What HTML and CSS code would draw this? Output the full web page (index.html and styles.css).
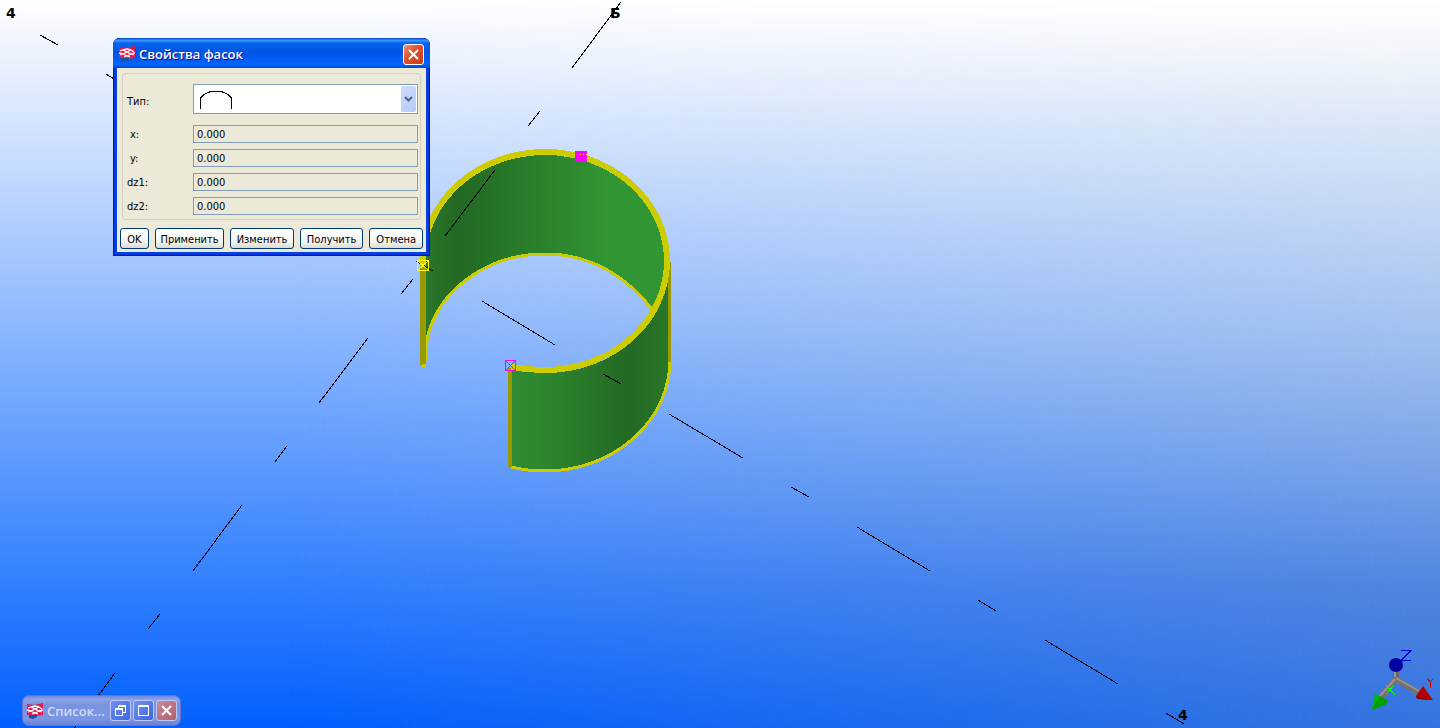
FILE: index.html
```html
<!DOCTYPE html>
<html lang="ru">
<head>
    <meta charset="UTF-8">
    <meta name="viewport" content="width=device-width, initial-scale=1.0">
    <title>Свойства фасок</title>
    <link rel="stylesheet" href="styles.css">
</head>
<body>

<main class="viewport">
    <svg class="scene" viewBox="0 0 1440 728" preserveAspectRatio="xMinYMin slice" shape-rendering="crispEdges">
        <defs>
            <linearGradient id="inside" gradientUnits="userSpaceOnUse" x1="426" y1="0" x2="665" y2="0">
                <stop offset="0" stop-color="#2a772a"/>
                <stop offset="0.13" stop-color="#236823"/>
                <stop offset="0.4" stop-color="#297b2a"/>
                <stop offset="0.75" stop-color="#319534"/>
                <stop offset="1" stop-color="#319534"/>
            </linearGradient>
            <linearGradient id="outside" gradientUnits="userSpaceOnUse" x1="510" y1="0" x2="670" y2="0">
                <stop offset="0" stop-color="#2f8d32"/>
                <stop offset="0.2" stop-color="#2d872f"/>
                <stop offset="0.75" stop-color="#236823"/>
                <stop offset="1" stop-color="#2a782a"/>
            </linearGradient>
        </defs>

        <!-- curved plate, inner wall -->
        <path d="M426 362V261A119 106 0 0 1 664 261A119 106 0 0 1 652 309Q606 254 545 254A119 108 0 0 0 426 350Z" fill="url(#inside)"/>
        <path d="M425 362Q426 340 430 328C445 286 490 254 545 254Q608 254 652 309" fill="none" stroke="#cccc00" stroke-width="3"/>
        <!-- outer wall -->
        <path d="M511 369Q528 373 546 373A124 112 0 0 0 670 261V360A125 111 0 0 1 545 471Q528 471 511 467Z" fill="url(#outside)"/>
        <path d="M670 360A125 111 0 0 1 545 471Q528 471 511 467" fill="none" stroke="#cccc00" stroke-width="3"/>
        <path d="M668 262h3v100h-3zM508 368h4v99h-4zM420 255h6v110h-6z" fill="#999900"/>
        <!-- top edge -->
        <path d="M423 266V261A122 109 0 0 1 545 152A122 109 0 0 1 667 261A122 109 0 0 1 545 370Q528 370 511 367" fill="none" stroke="#cccc00" stroke-width="6"/>
        <path d="M422 364h4v3h-4z" fill="#cccc00"/>

        <!-- grid axes -->
        <path class="axis" d="M40 35l18 10M106 74l18 11M416 261l17 10M482 301l73 44M603 374l18 10M669 414l74 44M791 487l18 10M857 527l73 44M978 600l18 11M1045 640l73 44M1166 713l18 11"/>
        <path class="axis" d="M621 2L572 68M540 111l-12 15M495 170l-50 66M413 279l-12 15M368 338l-49 65M287 446l-12 16M242 505l-49 66M160 614l-12 15M115 673l-49 66"/>

        <!-- contour points -->
        <path d="M575 151h12v11h-12z" fill="#ff00ff"/>
        <path d="M577 154h1m2 0h1m2 0h1m2 0h1" stroke="#ffff00"/>
        <path d="M417.500 260.500h11v10h-11zl11 10m0-10l-11 10" fill="none" stroke="#ffff00"/>
        <path d="M505.500 360.500h10v10h-10zl10 10m0-10l-10 10" fill="none" stroke="#ff00ff"/>

        <text class="axis-name" x="6" y="18">4</text>
        <text class="axis-name" x="610" y="18">Б</text>
        <text class="axis-name" x="1178" y="720">4</text>
    </svg>

    <svg class="compass" width="72" height="66" viewBox="0 0 72 66">
        <path d="M28 15v14" stroke="#68686c" stroke-width="6"/>
        <path d="M28 29L12 48" stroke="#77706f" stroke-width="6"/>
        <path d="M28 29l23 14" stroke="#77706f" stroke-width="6"/>
        <path d="M27 29L11 47M28 28l23 13M27 18v9" stroke="#9c9494" stroke-width="2"/>
        <circle cx="28" cy="15" r="7" fill="#0000a0"/>
        <path d="M7 44l13 6q-1 4-3 5L4 60z" fill="#00a000"/>
        <path d="M7 44l5 2-8 14z" fill="#00b510"/>
        <path d="M55 36L48 46q0 2 2 3l15 1z" fill="#b50000"/>
        <path d="M48 46q0 2 2 3l15 1z" fill="#820000"/>
        <g fill="none" shape-rendering="crispEdges">
            <path d="M33 .500h10L33 10.500h10" stroke="#0000d0"/>
            <path d="M18 35l9 10M26 35l-8 9" stroke="#00ff00"/>
            <path d="M59 28l3 4v6M66 28l-4 4" stroke="#e80000"/>
        </g>
    </svg>

    <section class="dialog">
        <header class="title-bar">
            <svg class="logo" width="16" height="16" viewBox="0 0 16 16">
                <path d="M0 1l7 1 9-2v12l-6 1-10-1z" fill="#e6194b"/>
                <path d="M2 12h8v2l-4 2-4-1z" fill="#1d4fa8"/>
                <path d="M1 5l3-1 4 2 4-2 3 2M0 7l4 1 4-2 4 2 4-1M1 9l3-1 4 2 4-2 3 1M4 4l4-1 4 1M5 11l3-1 3 1" fill="none" stroke="#fff" stroke-width="1.300"/>
            </svg>
            <h1>Свойства фасок</h1>
            <button class="close" aria-label="Закрыть">
                <svg width="11" height="11" viewBox="0 0 11 11"><path d="M1 1l9 9M10 1l-9 9" stroke="#fff" stroke-width="2"/></svg>
            </button>
        </header>
        <form class="dialog-body">
            <div class="group">
                <div class="row type-row">
                    <label for="type">Тип:</label>
                    <div class="combo">
                        <select id="type">
                            <option value="arc" label=" "></option>
                        </select>
                        <svg class="arc" width="34" height="20" viewBox="0 0 34 20" shape-rendering="crispEdges"><path d="M1.500 19V8Q7 1 17 1t15.500 7V19" fill="none" stroke="#000"/></svg>
                        <span class="arrow"><svg width="9" height="6" viewBox="0 0 9 6"><path d="M1 1l3.500 3.500L8 1" fill="none" stroke="#4d6185" stroke-width="2"/></svg></span>
                    </div>
                </div>
                <div class="row indent"><label for="x">x:</label><input id="x" type="text" value="0.000"></div>
                <div class="row indent"><label for="y">y:</label><input id="y" type="text" value="0.000"></div>
                <div class="row"><label for="dz1">dz1:</label><input id="dz1" type="text" value="0.000"></div>
                <div class="row"><label for="dz2">dz2:</label><input id="dz2" type="text" value="0.000"></div>
            </div>
            <div class="buttons">
                <button type="button" class="ok">OK</button>
                <button type="button" class="wide">Применить</button>
                <button type="button">Изменить</button>
                <button type="button">Получить</button>
                <button type="button" class="cancel">Отмена</button>
            </div>
        </form>
    </section>

    <section class="minimized">
        <svg class="logo" width="16" height="16" viewBox="0 0 16 16">
            <path d="M0 1l7 1 9-2v12l-6 1-10-1z" fill="#dc1d58"/>
            <path d="M2 12h8v2l-4 2-4-1z" fill="#1d4fa8"/>
            <path d="M1 5l3-1 4 2 4-2 3 2M0 7l4 1 4-2 4 2 4-1M1 9l3-1 4 2 4-2 3 1M4 4l4-1 4 1M5 11l3-1 3 1" fill="none" stroke="#fff" stroke-width="1.300"/>
        </svg>
        <h2>Список...</h2>
        <button aria-label="Восстановить">
            <svg width="11" height="11" viewBox="0 0 11 11" shape-rendering="crispEdges"><path d="M3 0h8v8H8V7h2V2H4v1H3zM0 3h8v8H0zM1 5v5h6V5z" fill="#fff" fill-rule="evenodd"/></svg>
        </button>
        <button aria-label="Развернуть">
            <svg width="11" height="11" viewBox="0 0 11 11" shape-rendering="crispEdges"><path d="M0 0h11v11H0zM1 2v8h9V2z" fill="#fff" fill-rule="evenodd"/></svg>
        </button>
        <button class="close" aria-label="Закрыть">
            <svg width="11" height="11" viewBox="0 0 11 11"><path d="M1 1l9 9M10 1l-9 9" stroke="#fff" stroke-width="2"/></svg>
        </button>
    </section>
</main>

</body>
</html>
```

FILE: styles.css
```css
* {
    box-sizing: border-box;
}

body {
    margin: 0;
    font-family: "DejaVu Sans Condensed", "DejaVu Sans", sans-serif;
    font-size: 11px;
    color: #000;
}

.viewport {
    position: relative;
    height: 100vh;
    overflow: hidden;
    background: linear-gradient(#fff, #0060ff);
}

/* greyer sky towards the right edge */
.viewport::before {
    content: "";
    position: absolute;
    inset: 0;
    background: linear-gradient(#fff, #f0f4fa 8%, #d6e4f6 19%, #bed2f4 32%, #a3c2ef 45%, #7aa3e8 64%, #5386e0 80%, #3574df);
    mask-image: linear-gradient(to right, transparent 20%, #000);
}

.scene {
    position: relative;
    display: block;
    width: 100%;
    height: 100%;
}

.axis {
    fill: none;
    stroke: #000;
}

.axis-name {
    font: bold 14px "DejaVu Sans", sans-serif;
}

.compass {
    position: absolute;
    right: 0;
    bottom: 12px;
}

/* properties window */
.dialog {
    position: absolute;
    left: 113px;
    top: 38px;
    width: 317px;
    padding: 0 4px 4px;
    border-radius: 7px 7px 0 0;
    background: #0043e0;
    box-shadow: inset 0 0 0 1px #001fa5, inset 0 0 0 2px #0831d9;
}

.title-bar {
    display: flex;
    align-items: center;
    height: 30px;
    margin: 0 -4px;
    padding: 2px 6px 0;
    border-radius: 7px 7px 0 0;
    background: linear-gradient(#0042c4, #3a93ff 8%, #0063ee 18%, #0054e3 45%, #0060fb 80%, #0066ff 88%, #0046cf);
}

h1,
h2 {
    flex: 1;
    margin: 0 0 0 4px;
    font: 600 13px "Open Sans", "Noto Sans", sans-serif;
    color: #fff;
}

h1 {
    text-shadow: 1px 1px #0f1089;
}

.close,
.minimized button {
    display: flex;
    flex-shrink: 0;
    align-items: center;
    justify-content: center;
    width: 21px;
    height: 21px;
    padding: 0;
    border: 1px solid #fff;
    border-radius: 3px;
    background: linear-gradient(135deg, #f09478, #e2532e 40%, #c63a12);
}

.dialog-body {
    padding: 5px 3px 3px;
    background: #ece9d8;
}

.group {
    display: flex;
    flex-direction: column;
    gap: 6px;
    margin: 0 2px;
    padding: 10px 2px 4px 4px;
    border: 1px solid #d0d0bf;
    border-radius: 4px;
}

.row {
    display: flex;
    align-items: center;
    height: 18px;
}

.row label {
    width: 66px;
}

.indent label {
    padding-left: 3px;
}

.type-row {
    height: 30px;
    margin-bottom: 5px;
}

.type-row label {
    padding-top: 4px;
}

.combo {
    position: relative;
    flex: 1;
    height: 30px;
}

.combo select {
    appearance: none;
    width: 100%;
    height: 100%;
    border: 1px solid #7f9db9;
    background: #fff;
}

.arc {
    position: absolute;
    left: 6px;
    top: 6px;
    pointer-events: none;
}

.arrow {
    position: absolute;
    right: 2px;
    top: 2px;
    bottom: 2px;
    display: flex;
    align-items: center;
    justify-content: center;
    width: 15px;
    border-radius: 2px;
    background: linear-gradient(135deg, #cddbfc, #b5cbf8);
    pointer-events: none;
}

.row input {
    flex: 1;
    min-width: 0;
    height: 18px;
    padding: 0 3px;
    border: 1px solid #7f9db9;
    background: #ece9d8;
    font: inherit;
}

.buttons {
    display: flex;
    gap: 6px;
    margin-top: 8px;
}

.buttons button {
    width: 64px;
    height: 21px;
    padding: 1px 0 0;
    border: 1px solid #003c74;
    border-radius: 3px;
    background: linear-gradient(#fff, #f3f3ef 70%, #dcd8cc);
    font: inherit;
    color: #000;
}

.buttons .ok {
    width: 29px;
}

.buttons .wide {
    width: 70px;
}

.buttons .cancel {
    width: 54px;
}

/* minimized list window */
.minimized {
    position: absolute;
    left: 22px;
    bottom: 2px;
    display: flex;
    align-items: center;
    gap: 2px;
    width: 159px;
    height: 31px;
    padding: 0 3px 0 4px;
    border: 1px solid #6576d2;
    border-radius: 7px;
    background: linear-gradient(#7088de, #8da3e8 12%, #7a93df 30%, #7996e3 80%, #6b80d5);
}

.minimized h2 {
    margin-left: 2px;
    color: #d0dcf8;
}

.minimized button {
    border-color: #b9c8f6;
    background: linear-gradient(135deg, #7090ee, #3f66e2);
}

.minimized .close {
    background: linear-gradient(135deg, #c58a9a, #b0606c);
}
```
